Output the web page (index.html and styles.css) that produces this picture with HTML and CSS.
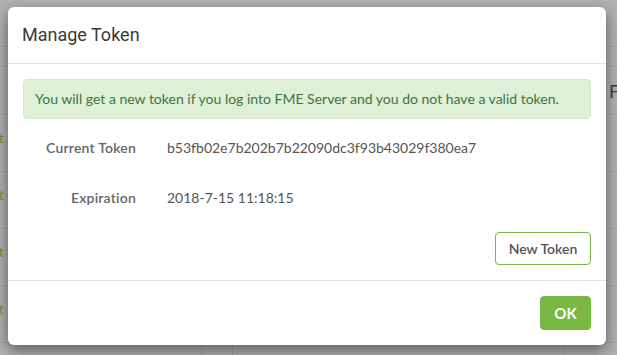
FILE: index.html
```html
<!DOCTYPE html>
<html>
<head>
<meta charset="utf-8">
<link rel="stylesheet" href="styles.css">
</head>
<body>
<div class="page">
  <div class="topbar"></div>
  <div class="strip"></div>
  <div class="thead"><span class="th-f">Fields</span></div>
  <div class="trow"><span class="cell-a">Text</span><span class="cell-b"></span><span class="cell-c"></span><span class="cell-d"></span></div>
  <div class="trow"><span class="cell-a">Text</span><span class="cell-b"></span><span class="cell-c"></span><span class="cell-d"></span></div>
  <div class="trow"><span class="cell-a">Text</span><span class="cell-b"></span><span class="cell-c"></span><span class="cell-d"></span></div>
  <div class="trow"><span class="cell-a">Text</span><span class="cell-b"></span><span class="cell-c"></span><span class="cell-d"></span></div>
  <div class="trow"><span class="cell-a">Text</span><span class="cell-b"></span><span class="cell-c"></span><span class="cell-d"></span></div>
</div>
<div class="backdrop"></div>
<div class="modal">
  <div class="modal-header">
    <h4 class="modal-title">Manage Token</h4>
  </div>
  <div class="modal-body">
    <div class="alert">You will get a new token if you log into FME Server and you do not have a valid token.</div>
    <div class="field">
      <span class="label">Current Token</span>
      <span class="value">b53fb02e7b202b7b22090dc3f93b43029f380ea7</span>
    </div>
    <div class="field">
      <span class="label">Expiration</span>
      <span class="value">2018-7-15 11:18:15</span>
    </div>
    <div class="actions">
      <button class="btn btn-outline">New Token</button>
    </div>
  </div>
  <div class="modal-footer">
    <button class="btn btn-primary">OK</button>
  </div>
</div>
</body>
</html>
```

FILE: styles.css
```css
* { box-sizing: border-box; }
html, body { margin: 0; padding: 0; }
body {
  width: 617px;
  height: 355px;
  overflow: hidden;
  background: #fff;
  font-family: Lato, "Liberation Sans", sans-serif;
  font-size: 14px;
  color: #555;
  position: relative;
}
.page { display: flex; flex-direction: column; }
.topbar { height: 47px; border-bottom: 1px solid #ececec; }
.strip { height: 20px; border-bottom: 1px solid #ececec; }
.thead {
  height: 48px;
  border-bottom: 1px solid #ececec;
  display: flex;
  align-items: center;
  padding-left: 609px;
  font-size: 18px;
  color: #555;
  white-space: nowrap;
}
.trow {
  height: 57px;
  border-bottom: 1px solid #ececec;
  display: flex;
  align-items: flex-start;
}
.cell-a {
  width: 202px;
  padding-top: 14px;
  text-indent: -22px;
  color: #9fd06d;
  border-right: 1px solid #ececec;
}
.cell-b { width: 31px; border-right: 1px solid #ececec; height: 100%; }
.cell-c { width: 332px; border-right: 1px solid #ececec; height: 100%; }
.cell-d { width: 31px; border-right: 1px solid #ececec; height: 100%; }

.backdrop {
  position: absolute;
  inset: 0;
  background: rgba(0, 0, 0, 0.3);
}
.modal {
  position: absolute;
  left: 8px;
  top: 7px;
  width: 598px;
  background: #fff;
  border-radius: 6px;
  box-shadow: 0 5px 15px rgba(0, 0, 0, 0.5);
}
.modal-header {
  padding: 15px 14px;
  border-bottom: 1px solid #e5e5e5;
}
.modal-title {
  margin: 0;
  font-family: Roboto, "Liberation Sans", sans-serif;
  font-weight: 400;
  font-size: 18px;
  line-height: 26px;
  color: #3a3a3a;
}
.modal-body {
  padding: 15px;
  display: flex;
  flex-direction: column;
}
.alert {
  background: #dff0d8;
  border: 1px solid #d6e9c6;
  border-radius: 4px;
  color: #3c763d;
  padding: 10px 11px;
  line-height: 18px;
  margin-bottom: 8px;
}
.field {
  display: grid;
  grid-template-columns: 113px 1fr;
  column-gap: 31px;
  height: 40px;
  align-items: center;
  margin-bottom: 10px;
}
.label {
  text-align: right;
  font-weight: 600;
  letter-spacing: 0.2px;
  color: #666;
}
.value { color: #555; }
.actions {
  display: flex;
  justify-content: flex-end;
  margin-top: 5px;
}
.btn {
  font-family: Lato, "Liberation Sans", sans-serif;
  font-size: 14px;
  font-weight: 600;
  border-radius: 4px;
  cursor: pointer;
}
.btn-outline {
  width: 96px;
  height: 33px;
  background: #fff;
  border: 1px solid #7ab648;
  color: #555;
}
.modal-footer {
  border-top: 1px solid #e5e5e5;
  padding: 15px;
  display: flex;
  justify-content: flex-end;
}
.btn-primary {
  width: 51px;
  height: 34px;
  background: #78b843;
  border: 1px solid #78b843;
  color: #fff;
  font-size: 15px;
  font-weight: 700;
}
```
